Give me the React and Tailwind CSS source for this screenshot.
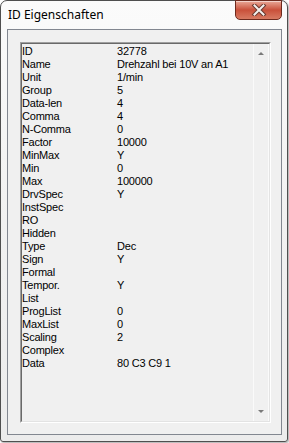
import React from "react";

const rows = [
  ["ID", "32778"],
  ["Name", "Drehzahl bei 10V an A1"],
  ["Unit", "1/min"],
  ["Group", "5"],
  ["Data-len", "4"],
  ["Comma", "4"],
  ["N-Comma", "0"],
  ["Factor", "10000"],
  ["MinMax", "Y"],
  ["Min", "0"],
  ["Max", "100000"],
  ["DrvSpec", "Y"],
  ["InstSpec", ""],
  ["RO", ""],
  ["Hidden", ""],
  ["Type", "Dec"],
  ["Sign", "Y"],
  ["Formal", ""],
  ["Tempor.", "Y"],
  ["List", ""],
  ["ProgList", "0"],
  ["MaxList", "0"],
  ["Scaling", "2"],
  ["Complex", ""],
  ["Data", "80 C3 C9 1"],
];

export default function App() {
  return (
    <div className="w-[289px] h-[443px] bg-white overflow-hidden">
      <div className="w-[288px] h-[442px] flex flex-col border border-[#4f4f4f] rounded-t-[7px] rounded-b-[3px] bg-gradient-to-b from-[#fbfbfb] via-[#f1f1f1] to-[#ececec] shadow-[1px_1px_2px_rgba(0,0,0,0.35)]">
        {/* title bar */}
        <div className="h-[28px] flex items-start justify-between shrink-0">
          <div
            className="pl-[7px] pt-[6px] text-[12px] leading-[16px] text-black"
            style={{ fontFamily: '"Noto Sans", "Liberation Sans", sans-serif' }}
          >
            ID Eigenschaften
          </div>
          <div className="mr-[5px] mt-[-1px] w-[47px] h-[20px] rounded-b-[5px] border border-[#6d2a1e] bg-gradient-to-b from-[#e9a898] via-[#c9503a] to-[#d77a62] flex items-center justify-center shadow-[inset_0_1px_0_rgba(255,255,255,0.5)]">
            <svg width="16" height="12" viewBox="0 0 16 12">
              <path d="M3.5 1.5 L12.5 10.5 M12.5 1.5 L3.5 10.5" stroke="#6a3a30" strokeWidth="4" strokeLinecap="square" />
              <path d="M3.5 1.5 L12.5 10.5 M12.5 1.5 L3.5 10.5" stroke="#f4f0ee" strokeWidth="2" strokeLinecap="square" />
            </svg>
          </div>
        </div>
        {/* client area */}
        <div className="ml-[6px] mr-[5px] h-[406px] border border-[#828790] bg-[#f0f0f0] flex pt-[12px] pl-[12px] pr-[10px] pb-[11px]">
          <div className="flex-1 flex border-t border-l border-[#a0a0a0] border-b border-r border-b-white border-r-white">
            <div className="flex-1 flex border-t border-l border-[#696969] border-b border-r border-b-[#e3e3e3] border-r-[#e3e3e3]">
              <div
                className="flex-1 pt-[1px] text-[11px] leading-[13px] tracking-[-0.2px] text-black"
                style={{ fontFamily: '"Liberation Sans", Arial, sans-serif' }}
              >
                {rows.map(([k, v]) => (
                  <div key={k} className="flex h-[13px] whitespace-nowrap">
                    <div className="w-[95px] shrink-0">{k}</div>
                    <div>{v}</div>
                  </div>
                ))}
              </div>
              <div className="w-[16px] shrink-0 flex flex-col justify-between border-l border-[#fafafa] border-r border-r-[#fafafa] bg-[#f0f0f0] py-[7px]">
                <svg width="14" height="5" viewBox="0 0 14 5">
                  <path d="M4 4 L7 1 L10 4 Z" fill="#7a7a7a" />
                </svg>
                <svg width="14" height="5" viewBox="0 0 14 5">
                  <path d="M4 1 L7 4 L10 1 Z" fill="#7a7a7a" />
                </svg>
              </div>
            </div>
          </div>
        </div>
      </div>
    </div>
  );
}
